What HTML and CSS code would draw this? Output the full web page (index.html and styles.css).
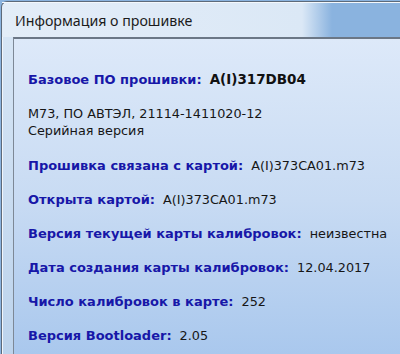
FILE: index.html
```html
<!DOCTYPE html>
<html lang="ru">
<head>
    <meta charset="UTF-8">
    <title>Информация о прошивке</title>
    <link rel="stylesheet" href="styles.css">
</head>
<body>
    <div class="window">
        <div class="titlebar">
            <span class="title">Информация о прошивке</span>
        </div>
        <div class="frame">
            <div class="panel">
                <div class="row head">
                    <span class="label">Базовое ПО прошивки:</span>
                    <span class="value big">A(I)317DB04</span>
                </div>
                <div class="desc">
                    <p>M73, ПО АВТЭЛ, 21114-1411020-12</p>
                    <p>Серийная версия</p>
                </div>
                <div class="row">
                    <span class="label">Прошивка связана с картой:</span>
                    <span class="value">A(I)373CA01.m73</span>
                </div>
                <div class="row">
                    <span class="label">Открыта картой:</span>
                    <span class="value">A(I)373CA01.m73</span>
                </div>
                <div class="row">
                    <span class="label">Версия текущей карты калибровок:</span>
                    <span class="value">неизвестна</span>
                </div>
                <div class="row">
                    <span class="label">Дата создания карты калибровок:</span>
                    <span class="value">12.04.2017</span>
                </div>
                <div class="row">
                    <span class="label">Число калибровок в карте:</span>
                    <span class="value">252</span>
                </div>
                <div class="row">
                    <span class="label">Версия Bootloader:</span>
                    <span class="value">2.05</span>
                </div>
            </div>
        </div>
    </div>
</body>
</html>
```

FILE: styles.css
```css
* {
    box-sizing: border-box;
    margin: 0;
    padding: 0;
}
html, body {
    width: 400px;
    height: 354px;
    overflow: hidden;
    background-color: #8ab3df;
}
.window {
    margin: 1px 0 0 1px;
    height: 360px;
    border: 1px solid #5d6a7a;
    border-right: none;
    border-bottom: none;
    border-radius: 6px 0 0 0;
    background: linear-gradient(to right, #e3edf8 0, #dbe8f6 300px, #8ab3df 330px);
    display: flex;
    flex-direction: column;
}
.titlebar {
    height: 36px;
    padding: 0 0 0 13px;
    display: flex;
    align-items: center;
    border-top: 1px solid #f4f8fc;
}
.title {
    font-family: "Noto Sans", sans-serif;
    font-size: 14.2px;
    color: #1b1b1b;
}
.frame {
    flex: 1;
    padding-left: 10px;
    background: linear-gradient(to bottom, #d6e5f5, #bcd3ec);
    border-left: 1px solid #f2f6fb;
}
.panel {
    height: 100%;
    border-top: 2px solid #6b7786;
    border-left: 1px solid #7d8896;
    background: linear-gradient(to bottom, #dde9f9 0, #c8dbf3 50%, #a8c7ed 100%);
    padding: 32px 0 0 14px;
    font-family: "DejaVu Sans", sans-serif;
    font-size: 12.8px;
    color: #161616;
}
.row {
    display: flex;
    align-items: baseline;
    gap: 8px;
    height: 34px;
    line-height: 17px;
    white-space: nowrap;
}
.label {
    font-weight: bold;
    font-size: 13px;
    color: #1717a8;
}
.value.big {
    font-weight: bold;
    font-size: 13.5px;
    color: #111;
}
.desc {
    line-height: 17px;
    height: 52px;
}
```
